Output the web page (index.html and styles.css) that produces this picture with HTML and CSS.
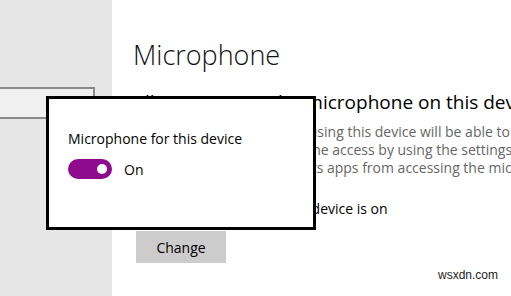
FILE: index.html
```html
<!DOCTYPE html>
<html>
<head>
  <meta charset="UTF-8">
  <link rel="stylesheet" href="styles.css">
</head>
<body>
  <div class="window">
    <div class="sidebar">
      <div class="nav-box"></div>
    </div>

    <div class="content">
      <h1 class="title">Microphone</h1>
      <h2 class="subtitle">Allow access to the microphone on this device</h2>
      <p class="desc">
        If you allow access, people using this device will be able to choose<br>
        if their apps have microphone access by using the settings on this page.<br>
        Denying access also prevents apps from accessing the microphone.
      </p>
      <p class="status">Microphone access for this device is on</p>
      <button class="change-btn">Change</button>
    </div>

    <div class="popup">
      <p class="popup-label">Microphone for this device</p>
      <div class="toggle-row">
        <span class="toggle"><span class="knob"></span></span>
        <span class="toggle-text">On</span>
      </div>
    </div>

    <span class="watermark">wsxdn.com</span>
  </div>
</body>
</html>
```

FILE: styles.css
```css
body{
  margin: 0;
  background-color: white;
  font-family: "Open Sans", "Noto Sans", sans-serif;
  color: black;
  overflow: hidden;
}
.window{
  position: relative;
  display: flex;
  width: 511px;
  height: 296px;
  overflow: hidden;
}
.sidebar{
  width: 112px;
  flex-shrink: 0;
  background-color: #e6e6e6;
  padding-top: 87px;
}
.nav-box{
  width: 93px;
  height: 28px;
  background-color: #f0f0f0;
  border: 2px solid #8a8a8a;
  border-left: none;
}
.content{
  flex: 1;
  padding-left: 21px;
  white-space: nowrap;
}
.title{
  font-size: 27px;
  font-weight: 300;
  line-height: 34px;
  margin: 38px 0 0 0;
  color: #111111;
}
.subtitle{
  font-size: 19px;
  font-weight: normal;
  line-height: 24px;
  margin: 18px 0 0 0;
}
.desc{
  font-size: 14px;
  line-height: 18px;
  color: #666666;
  margin: 9px 0 0 0;
}
.status{
  font-size: 14px;
  line-height: 18px;
  margin: 23px 0 0 0;
}
.change-btn{
  display: block;
  margin-top: 13px;
  margin-left: 3px;
  width: 90px;
  height: 32px;
  border: none;
  background-color: #cccccc;
  font-family: "Open Sans", "Noto Sans", sans-serif;
  font-size: 14px;
  color: black;
  padding: 0;
}

/* flyout that sits over the page */
.popup{
  position: absolute;
  left: 46px;
  top: 96px;
  width: 270px;
  height: 134px;
  box-sizing: border-box;
  background-color: white;
  border: 3px solid black;
  padding: 31px 0 0 19px;
}
.popup-label{
  font-size: 14px;
  line-height: 18px;
  margin: 0;
}
.toggle-row{
  display: flex;
  align-items: center;
  margin-top: 11px;
}
.toggle{
  position: relative;
  width: 44px;
  height: 20px;
  border-radius: 10px;
  background-color: #8e0b8f;
}
.knob{
  position: absolute;
  right: 5px;
  top: 5px;
  width: 10px;
  height: 10px;
  border-radius: 50%;
  background-color: white;
}
.toggle-text{
  font-size: 14px;
  margin-left: 12px;
}
.watermark{
  position: absolute;
  left: 438px;
  top: 268px;
  font-family: "Liberation Sans", Arial, sans-serif;
  font-size: 12px;
  color: #222222;
}
```
